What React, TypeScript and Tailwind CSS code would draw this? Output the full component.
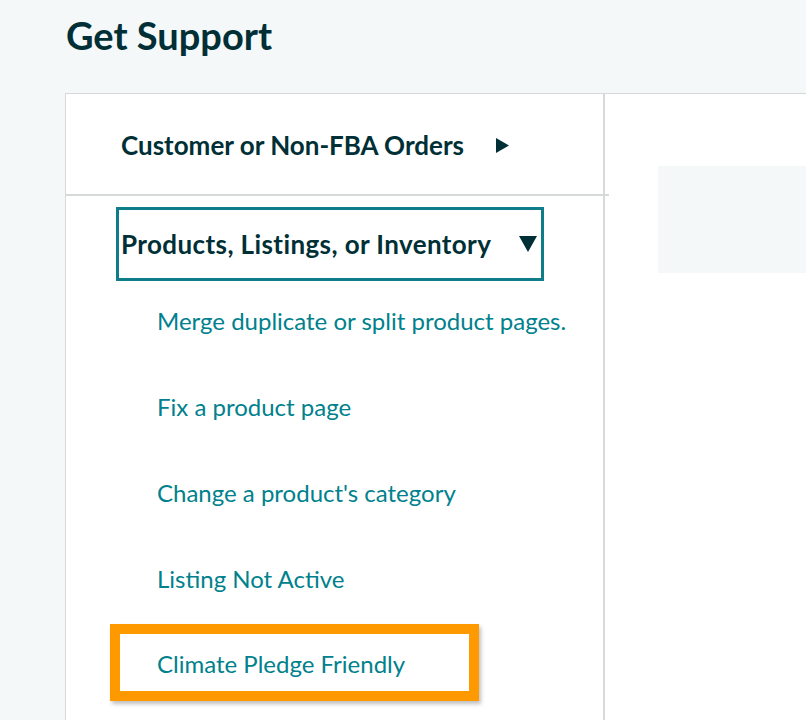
import React from "react";

const links = [
  "Merge duplicate or split product pages.",
  "Fix a product page",
  "Change a product's category",
  "Listing Not Active",
];

export default function App() {
  return (
    <div
      className="w-[806px] h-[720px] overflow-hidden bg-[#f5f8f9] text-[#0f3a3f]"
      style={{ fontFamily: "Lato, 'Noto Sans', sans-serif" }}
    >
      <h1 className="pl-[66px] pt-[12px] h-[93px] text-[38px] font-bold leading-[46px] text-[#002f36]">
        Get Support
      </h1>
      <div className="ml-[65px] flex h-[627px] w-[760px] border-l border-t border-[#d5d9d9] bg-white">
        <div className="w-[539px] shrink-0 border-r-2 border-[#d5d9d9]">
          <div className="relative flex h-[100px] items-center pl-[55px] pt-[3px]">
            <span className="text-[26px] font-bold text-[#002f36]">Customer or Non-FBA Orders</span>
            <svg className="ml-[32px]" width="13" height="15" viewBox="0 0 13 15">
              <path d="M0 0 L13 7.5 L0 15 Z" fill="#002f36" />
            </svg>
            <div className="absolute left-0 bottom-[-2px] h-[2px] w-[543px] bg-[#d5d9d9]" />
          </div>
          <div className="pt-[13px] pl-[50px]">
            <div className="flex h-[74px] w-[428px] items-center border-[3px] border-[#0f7c89] pl-[2px]">
              <span className="text-[26px] font-bold tracking-[0.4px] text-[#002f36]">Products, Listings, or Inventory</span>
              <svg className="ml-[28px]" width="18" height="16" viewBox="0 0 18 16">
                <path d="M0 0 L18 0 L9 16 Z" fill="#002f36" />
              </svg>
            </div>
            <div className="-mt-[3px] flex flex-col">
              {links.map((l) => (
                <div key={l} className="flex h-[86px] items-center pl-[41px]">
                  <span className="text-[24px] text-[#00818d]">{l}</span>
                </div>
              ))}
            </div>
            <div className="mt-[2px] ml-[-6px] flex h-[77px] w-[369px] items-center border-[10px] border-[#ff9900] bg-white pl-[37px] pt-[2px] shadow-[2px_3px_4px_rgba(0,0,0,0.25)]">
              <span className="text-[24px] text-[#00818d]">Climate Pledge Friendly</span>
            </div>
          </div>
        </div>
        <div className="flex-1 pt-[72px] pl-[53px]">
          <div className="h-[107px] w-full bg-[#f5f8f9]" />
        </div>
      </div>
    </div>
  );
}
